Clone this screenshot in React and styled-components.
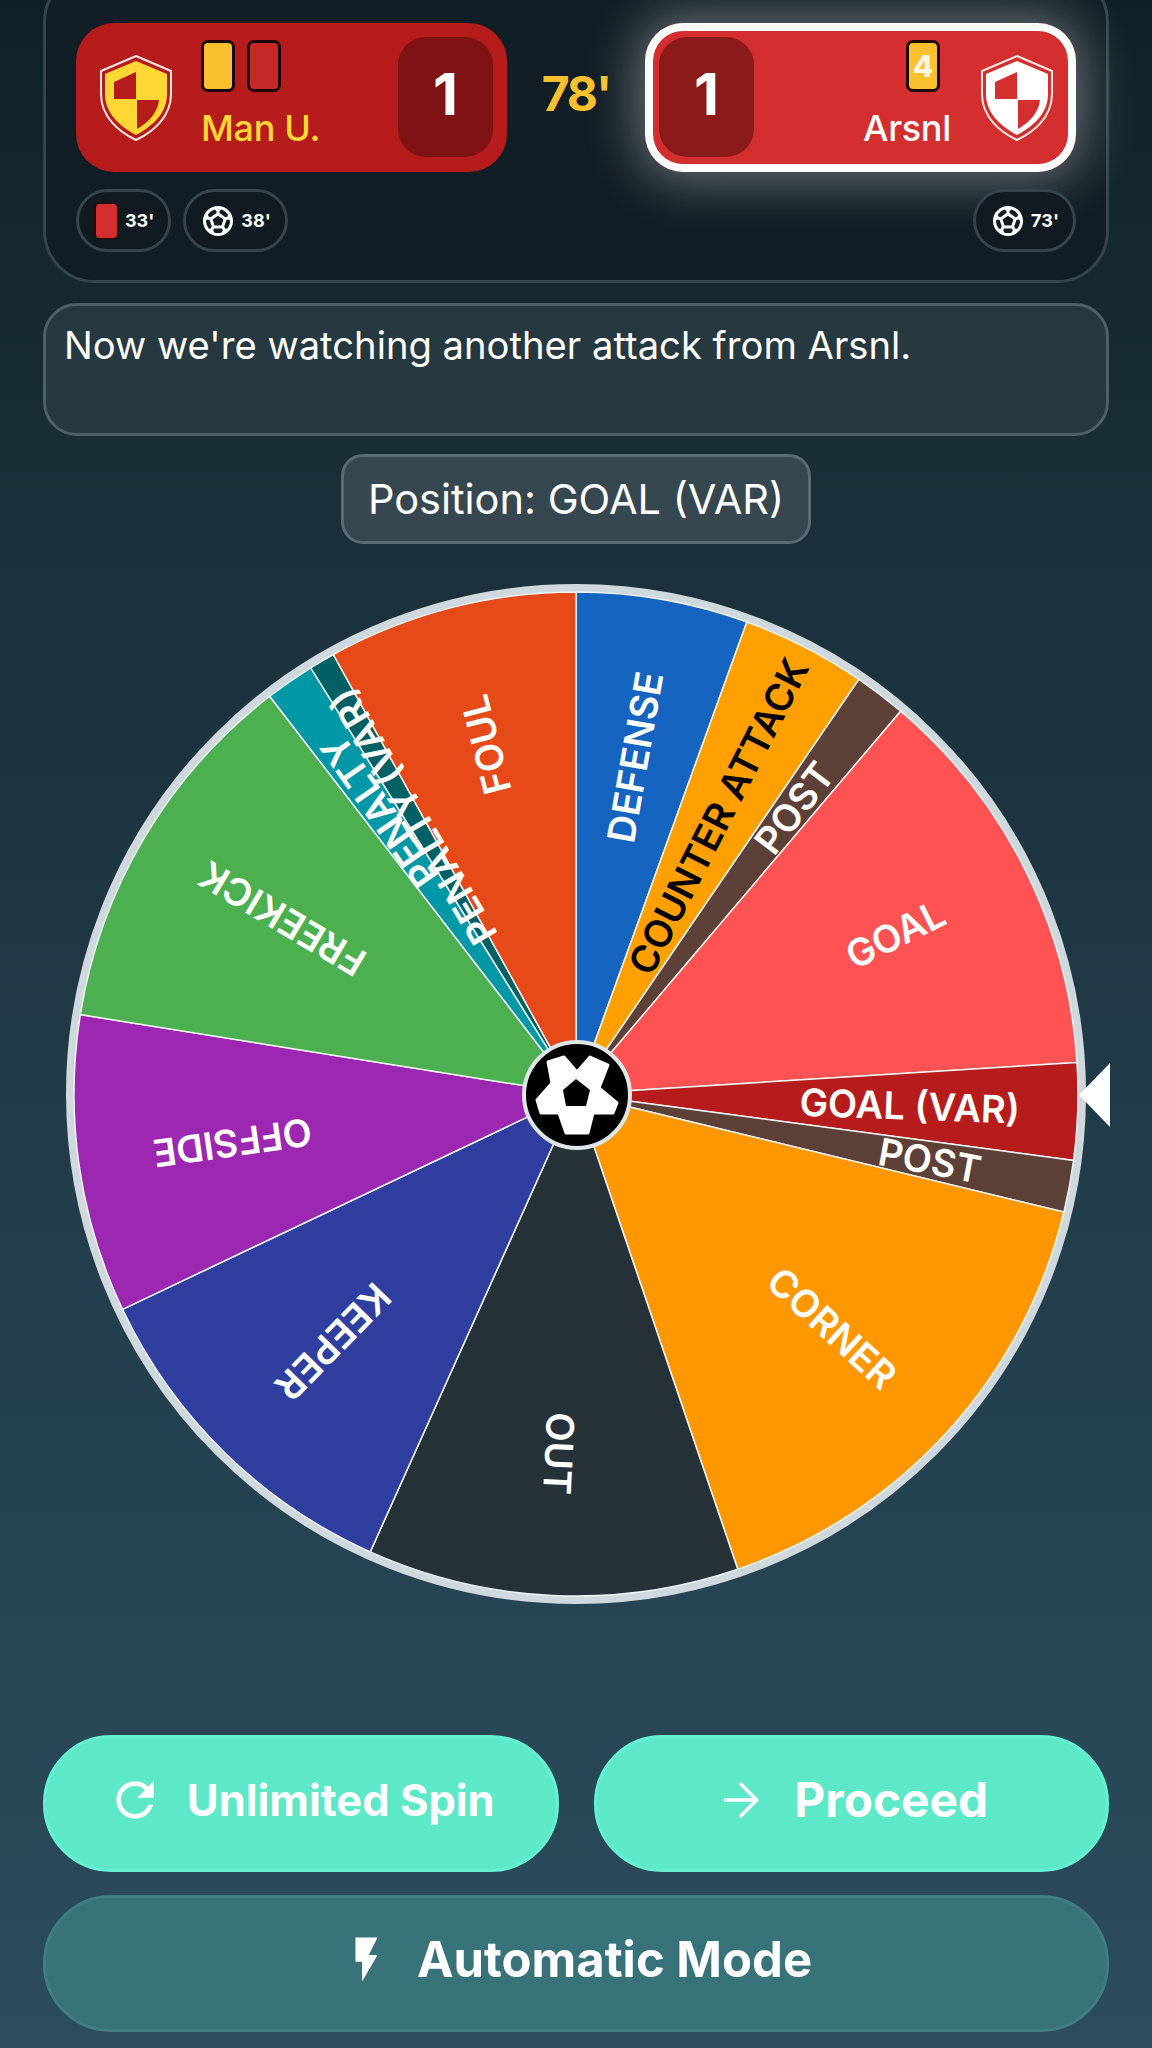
import React from "react";
import styled, { createGlobalStyle } from "styled-components";
import { MdOutlineSportsSoccer, MdRefresh, MdFlashOn } from "react-icons/md";
import { ArrowRight } from "lucide-react";

const Global = createGlobalStyle`
  html, body { margin: 0; padding: 0; background: #1a2e38; }
  * { box-sizing: border-box; }
`;

const Page = styled.div`
  width: 1152px;
  height: 2048px;
  overflow: hidden;
  padding: 0 43px;
  display: flex;
  flex-direction: column;
  font-family: Inter, "Noto Sans", sans-serif;
  color: #fff;
  background: linear-gradient(180deg, #0f2029 0%, #1a2e38 22%, #2b4d5e 100%);
`;

const ScorePanel = styled.section`
  margin-top: -30px;
  padding: 50px 30px 28px;
  background: #121e25;
  border: 3px solid #36454d;
  border-radius: 52px;
  display: flex;
  flex-direction: column;
  gap: 17px;
`;

const TeamsRow = styled.div`
  display: flex;
  align-items: center;
`;

const TeamCard = styled.div`
  width: 431px;
  height: 149px;
  flex: none;
  padding: 14px;
  display: flex;
  flex-direction: ${(p) => (p.$reverse ? "row-reverse" : "row")};
  background: ${(p) => p.$bg};
  border-radius: 38px;
  box-shadow: ${(p) =>
    p.$active ? "inset 0 0 0 8px #fff, 0 0 50px 10px rgba(255,255,255,.34)" : "none"};
`;

const ShieldSlot = styled.svg`
  width: 74px;
  height: 88px;
  flex: none;
  margin: 17px ${(p) => (p.$reverse ? "8px" : "0")} 0 ${(p) => (p.$reverse ? "0" : "9px")};
`;

const Info = styled.div`
  flex: 1;
  padding: 3px ${(p) => (p.$reverse ? "29px" : "0")} 0 ${(p) => (p.$reverse ? "0" : "28px")};
  display: flex;
  flex-direction: column;
  align-items: ${(p) => (p.$reverse ? "flex-end" : "flex-start")};
`;

const CardRow = styled.div`
  display: flex;
  gap: 12px;
  margin-right: ${(p) => (p.$reverse ? "11px" : "0")};
`;

const Booking = styled.div`
  width: 34px;
  height: 52px;
  border: 3px solid #1d0606;
  border-radius: 7px;
  background: ${(p) => p.$bg};
  display: flex;
  align-items: center;
  justify-content: center;
  font-size: 30px;
  font-weight: 800;
  color: #fff6dc;
`;

const TeamName = styled.div`
  margin-top: 18px;
  font-size: 36px;
  line-height: 36px;
  font-weight: 500;
  letter-spacing: -0.3px;
  color: ${(p) => p.$color};
`;

const ScoreBox = styled.div`
  width: 95px;
  height: 120px;
  flex: none;
  border-radius: 28px;
  background: ${(p) => p.$bg};
  display: flex;
  align-items: center;
  justify-content: center;
  font-size: 58px;
  font-weight: 700;
  padding-bottom: 6px;
`;

const Clock = styled.div`
  flex: 1;
  text-align: center;
  font-size: 48px;
  letter-spacing: -2px;
  font-weight: 700;
  color: #fbc02d;
  padding-bottom: 8px;
`;

const ChipRow = styled.div`
  display: flex;
  justify-content: space-between;
`;

const ChipGroup = styled.div`
  display: flex;
  gap: 12px;
`;

const Chip = styled.div`
  height: 63px;
  padding: 0 14px 0 17px;
  display: flex;
  align-items: center;
  gap: 8px;
  border: 3px solid #36454d;
  border-radius: 32px;
  background: #101a20;
  font-size: 18px;
  font-weight: 700;
`;

const ChipCard = styled.span`
  width: 21px;
  height: 34px;
  border-radius: 4px;
  background: #d32f2f;
  box-shadow: 0 0 0 1.5px #2a0a0a;
`;

const Ball = styled(MdOutlineSportsSoccer)`
  margin: 0 -3px;
`;

const Message = styled.div`
  margin-top: 20px;
  height: 133px;
  padding: 16px 18px;
  background: #263840;
  border: 3px solid #4f6068;
  border-radius: 34px;
  font-size: 38.2px;
  line-height: 46px;
`;

const PositionTag = styled.div`
  align-self: center;
  margin-top: 18px;
  width: 470px;
  height: 90px;
  display: flex;
  align-items: center;
  justify-content: center;
  background: #37474f;
  border: 3px solid #5b6b73;
  border-radius: 22px;
  font-size: 41.5px;
`;

const WheelBox = styled.div`
  position: relative;
  align-self: center;
  width: 1020px;
  height: 1020px;
  margin-top: 40px;
  flex: none;
`;

const WheelSvg = styled.svg`
  display: block;
  width: 1020px;
  height: 1020px;
`;

const WheelLabel = styled.text`
  font-family: Inter, "Noto Sans", sans-serif;
  font-size: 38px;
  font-weight: 600;
`;

const Pointer = styled.div`
  position: absolute;
  top: 479px;
  right: -24px;
  width: 31px;
  height: 64px;
  background: #fff;
  clip-path: polygon(0 50%, 100% 0, 100% 100%);
`;

const ActionRow = styled.div`
  margin-top: 131px;
  display: grid;
  grid-template-columns: 1fr 1fr;
  gap: 35px;
`;

const Action = styled.button`
  height: 137px;
  width: 100%;
  margin-top: ${(p) => (p.$top ? "23px" : "0")};
  border: 3px solid ${(p) => (p.$muted ? "#417e84" : "#66f0d2")};
  border-radius: 68px;
  background: ${(p) => (p.$muted ? "#38737a" : "#5de8c8")};
  color: #fff;
  display: flex;
  align-items: center;
  justify-content: center;
  gap: ${(p) => p.$gap}px;
  padding: 0 0 8px;
  font-family: Inter, "Noto Sans", sans-serif;
  font-size: ${(p) => p.$size}px;
  font-weight: 700;
`;

const CX = 510;
const R = 502;

const slices = [
  [0, 19.9, "#1565c0"],
  [19.9, 34.3, "#ffa000"],
  [34.3, 40.3, "#5d4037"],
  [40.3, 86.4, "#ff5252"],
  [86.4, 97.6, "#b71c1c"],
  [97.6, 103.6, "#5d4037"],
  [103.6, 161.2, "#ff9800"],
  [161.2, 204.2, "#263238"],
  [204.2, 244.6, "#303f9f"],
  [244.6, 279.1, "#9c27b0"],
  [279.1, 322.4, "#4caf50"],
  [322.4, 328.1, "#0097a7"],
  [328.1, 331.1, "#006064"],
  [331.1, 360, "#e64a19"],
];

const labels = [
  ["DEFENSE", 9.9, 342, "#fff"],
  ["COUNTER ATTACK", 27.1, 312, "#000"],
  ["POST", 37.3, 360, "#fff"],
  ["GOAL", 63.4, 357, "#fff"],
  ["GOAL (VAR)", 92, 334, "#fff"],
  ["POST", 100.6, 360, "#fff"],
  ["CORNER", 132.4, 347, "#fff"],
  ["OUT", 182.7, 360, "#fff"],
  ["KEEPER", 224.4, 347, "#fff"],
  ["OFFSIDE", 261.9, 347, "#fff"],
  ["FREEKICK", 300.8, 342, "#fff"],
  ["PENALTY", 325.2, 344, "#fff"],
  ["PENALTY (VAR)", 329.6, 322, "#fff"],
  ["FOUL", 345.5, 361, "#fff"],
];

const pt = (deg, r) => {
  const a = ((deg - 90) * Math.PI) / 180;
  return [CX + r * Math.cos(a), CX + r * Math.sin(a)];
};

const slicePath = (a, b) => {
  const [x1, y1] = pt(a, R);
  const [x2, y2] = pt(b, R);
  return `M${CX} ${CX}L${x1} ${y1}A${R} ${R} 0 ${b - a > 180 ? 1 : 0} 1 ${x2} ${y2}Z`;
};

function Shield({ fill, quarter, stroke, reverse }) {
  return (
    <ShieldSlot $reverse={reverse} viewBox="8 12 74 88">
      <path
        d="M45 14L80 29V52C80 75 62 90 45 98C28 90 10 75 10 52V29Z"
        fill={quarter}
        stroke={stroke}
        strokeWidth="2"
      />
      <path d="M45 19L76 32V52C76 72 60 85 45 93C30 85 14 72 14 52V32Z" fill={fill} />
      <path d="M45 30L23 40V57H45Z" fill={quarter} />
      <path d="M46 58H68C67 70 58 80 46 87Z" fill={quarter} />
    </ShieldSlot>
  );
}

function Wheel() {
  return (
    <WheelSvg viewBox="0 0 1020 1020">
      <circle cx={CX} cy={CX} r={506} fill="none" stroke="#cfd8dc" strokeWidth="8" />
      {slices.map(([a, b, c]) => (
        <path key={a} d={slicePath(a, b)} fill={c} stroke="#eef3f3" strokeWidth="1.5" />
      ))}
      {labels.map(([t, deg, r, c]) => {
        const [x, y] = pt(deg, r);
        return (
          <WheelLabel
            key={t + deg}
            x={x}
            y={y}
            fill={c}
            textAnchor="middle"
            dominantBaseline="central"
            transform={`rotate(${deg - 90} ${x} ${y})`}
          >
            {t}
          </WheelLabel>
        );
      })}
      <circle cx={CX + 1} cy={CX + 1} r={53} fill="#000" stroke="#dfe6e8" strokeWidth="4" />
      <g transform={`translate(${CX + 1} ${CX + 1})`}>
        <path
          d="M-29 -33L-13 -38L0 -23L13 -38L31 -30L22 -7L40 8L36 18L16 18L11 38L-11 38L-18 18L-36 18L-40 5L-25 -12Z"
          fill="#fff"
          stroke="#fff"
          strokeWidth="3"
          strokeLinejoin="round"
        />
        <path d="M-1 -16L13 -5L9 11L-11 11L-14 -5Z" fill="#000" />
      </g>
    </WheelSvg>
  );
}

export default function App() {
  return (
    <Page>
      <Global />
      <ScorePanel>
        <TeamsRow>
          <TeamCard $bg="#b71c1c">
            <Shield fill="#fdd835" quarter="#b71c1c" stroke="#ffe9e4" />
            <Info>
              <CardRow>
                <Booking $bg="#fbc02d" />
                <Booking $bg="#c62828" />
              </CardRow>
              <TeamName $color="#fdd835">Man U.</TeamName>
            </Info>
            <ScoreBox $bg="#7f1212">1</ScoreBox>
          </TeamCard>
          <Clock>78'</Clock>
          <TeamCard $bg="#d32f2f" $active $reverse>
            <Shield fill="#fff" quarter="#d32f2f" stroke="#ffe9e4" reverse />
            <Info $reverse>
              <CardRow $reverse>
                <Booking $bg="#fbc02d">4</Booking>
              </CardRow>
              <TeamName $color="#fff">Arsnl</TeamName>
            </Info>
            <ScoreBox $bg="#8b1a1a">1</ScoreBox>
          </TeamCard>
        </TeamsRow>
        <ChipRow>
          <ChipGroup>
            <Chip>
              <ChipCard />
              33'
            </Chip>
            <Chip>
              <Ball size={36} />
              38'
            </Chip>
          </ChipGroup>
          <ChipGroup>
            <Chip>
              <Ball size={36} />
              73'
            </Chip>
          </ChipGroup>
        </ChipRow>
      </ScorePanel>
      <Message>Now we're watching another attack from Arsnl.</Message>
      <PositionTag>Position: GOAL (VAR)</PositionTag>
      <WheelBox>
        <Wheel />
        <Pointer />
      </WheelBox>
      <ActionRow>
        <Action $size={43.5} $gap={24}>
          <MdRefresh size={56} />
          Unlimited Spin
        </Action>
        <Action $size={47.8} $gap={26}>
          <ArrowRight size={54} strokeWidth={1.5} />
          Proceed
        </Action>
      </ActionRow>
      <Action $muted $top $size={49} $gap={24}>
        <MdFlashOn size={53} />
        Automatic Mode
      </Action>
    </Page>
  );
}
